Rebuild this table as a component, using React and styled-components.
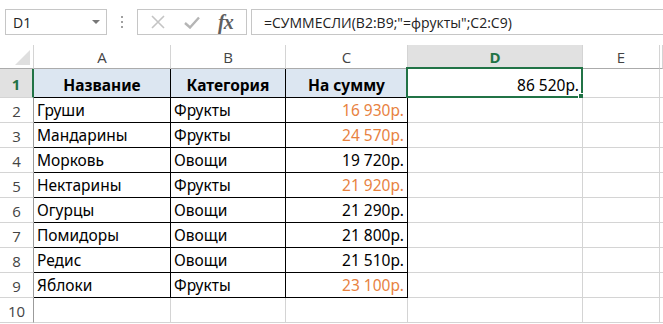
import React from "react";
import styled, { createGlobalStyle } from "styled-components";

const GlobalStyle = createGlobalStyle`
  html, body {
    margin: 0;
    padding: 0;
    background: #fff;
  }
  body {
    font-family: "Noto Sans", "Open Sans", sans-serif;
    overflow: hidden;
  }
`;

const Page = styled.div`
  width: 663px;
  height: 324px;
  overflow: hidden;
  background: #fff;
`;

const Toolbar = styled.div`
  display: flex;
  align-items: center;
  height: 26px;
  padding: 9px 0 10px 5px;
  font-family: "Open Sans", "Noto Sans", sans-serif;
`;

const NameBox = styled.div`
  box-sizing: border-box;
  width: 102px;
  height: 26px;
  border: 1px solid #c6c6c6;
  display: flex;
  align-items: center;
  justify-content: space-between;
  padding: 0 6px 0 7px;
  font-size: 14px;
  color: #222;
`;

const Caret = styled.span`
  width: 0;
  height: 0;
  border-left: 4px solid transparent;
  border-right: 4px solid transparent;
  border-top: 4px solid #777;
`;

const Grip = styled.div`
  width: 30px;
  display: flex;
  justify-content: center;
  svg {
    display: block;
  }
`;

const FxBox = styled.div`
  box-sizing: border-box;
  width: 110px;
  height: 26px;
  border: 1px solid #c6c6c6;
  display: flex;
  align-items: center;
  justify-content: space-around;
  padding: 0 4px;
`;

const FxLabel = styled.span`
  font-family: "Liberation Serif", "DejaVu Serif", serif;
  font-style: italic;
  font-weight: bold;
  font-size: 20px;
  color: #5f5f5f;
  letter-spacing: -1px;
`;

const FormulaInput = styled.div`
  box-sizing: border-box;
  flex: 1;
  height: 26px;
  margin-left: 4px;
  border: 1px solid #c6c6c6;
  border-right: none;
  display: flex;
  align-items: center;
  padding-left: 12px;
  font-size: 14px;
  color: #222;
`;

const Sheet = styled.div`
  display: grid;
  grid-template-columns: 34px 137px 115px 122px 175px 77px 3px;
  grid-template-rows: 24px 29px repeat(9, 25px);
`;

const ColHead = styled.div`
  box-sizing: border-box;
  border-right: 1px solid #d4d4d4;
  border-bottom: 1px solid #ababab;
  background: ${(p) => (p.$active ? "#e1e1e1" : "#fff")};
  color: ${(p) => (p.$active ? "#217346" : "#444")};
  font-weight: ${(p) => (p.$active ? "bold" : "normal")};
  font-family: "Open Sans", "Noto Sans", sans-serif;
  font-size: 15px;
  display: flex;
  align-items: center;
  justify-content: center;
  padding-top: 1px;
`;

const Corner = styled.div`
  box-sizing: border-box;
  border-right: 1px solid #d4d4d4;
  border-bottom: 1px solid #ababab;
  position: relative;
  &::after {
    content: "";
    position: absolute;
    right: 3px;
    bottom: 3px;
    width: 0;
    height: 0;
    border-left: 15px solid transparent;
    border-bottom: 15px solid #dfdfdf;
  }
`;

const RowHead = styled.div`
  box-sizing: border-box;
  border-right: ${(p) => (p.$active ? "2px solid #217346" : "1px solid #9b9b9b")};
  border-bottom: 1px solid #d4d4d4;
  background: ${(p) => (p.$active ? "#e1e1e1" : "#fff")};
  color: ${(p) => (p.$active ? "#217346" : "#444")};
  font-weight: ${(p) => (p.$active ? "bold" : "normal")};
  font-family: "Open Sans", "Noto Sans", sans-serif;
  font-size: 15px;
  display: flex;
  align-items: center;
  justify-content: center;
  padding-top: 1px;
`;

const Cell = styled.div`
  box-sizing: border-box;
  position: relative;
  border-right: 1px solid ${(p) => (p.$boxed ? "#000" : "#d4d4d4")};
  border-bottom: 1px solid ${(p) => (p.$boxed ? "#000" : "#d4d4d4")};
  background: ${(p) => (p.$head ? "#dce6f1" : "#fff")};
  color: ${(p) => (p.$orange ? "#e8823f" : "#000")};
  font-weight: ${(p) => (p.$head ? "bold" : "normal")};
  font-size: 15.5px;
  white-space: nowrap;
  display: flex;
  align-items: flex-end;
  justify-content: ${(p) =>
    p.$align === "right" ? "flex-end" : p.$align === "center" ? "center" : "flex-start"};
  padding: 0 3px 2px 3px;
  line-height: 20px;
`;

const Selection = styled.div`
  position: absolute;
  left: -2px;
  top: -2px;
  right: -1px;
  bottom: -1px;
  border: 2px solid #217346;
  pointer-events: none;
  &::after {
    content: "";
    position: absolute;
    right: -4px;
    bottom: -4px;
    width: 5px;
    height: 5px;
    background: #217346;
    border: 1px solid #fff;
  }
`;

const rows = [
  ["Груши", "Фрукты", "16 930р.", true],
  ["Мандарины", "Фрукты", "24 570р.", true],
  ["Морковь", "Овощи", "19 720р.", false],
  ["Нектарины", "Фрукты", "21 920р.", true],
  ["Огурцы", "Овощи", "21 290р.", false],
  ["Помидоры", "Овощи", "21 800р.", false],
  ["Редис", "Овощи", "21 510р.", false],
  ["Яблоки", "Фрукты", "23 100р.", true],
];

const columns = ["A", "B", "C", "D", "E", ""];

export default function App() {
  return (
    <Page>
      <GlobalStyle />
      <Toolbar>
        <NameBox>
          D1
          <Caret />
        </NameBox>
        <Grip>
          <svg width="3" height="12" viewBox="0 0 3 12">
            <rect x="0" y="0" width="2" height="2" fill="#a0a0a0" />
            <rect x="0" y="5" width="2" height="2" fill="#a0a0a0" />
            <rect x="0" y="10" width="2" height="2" fill="#a0a0a0" />
          </svg>
        </Grip>
        <FxBox>
          <svg width="14" height="14" viewBox="0 0 14 14">
            <path d="M1 1 L13 13 M13 1 L1 13" stroke="#c4c4c4" strokeWidth="1.6" fill="none" />
          </svg>
          <svg width="16" height="13" viewBox="0 0 16 13">
            <path d="M1 7 L6 11.5 L15 1.5" stroke="#b5b5b5" strokeWidth="2.4" fill="none" />
          </svg>
          <FxLabel>fx</FxLabel>
        </FxBox>
        <FormulaInput>=СУММЕСЛИ(B2:B9;"=фрукты";C2:C9)</FormulaInput>
      </Toolbar>

      <Sheet>
        <Corner />
        {columns.map((c, i) => (
          <ColHead key={i} $active={c === "D"}>
            {c}
          </ColHead>
        ))}

        <RowHead $active>1</RowHead>
        <Cell $boxed $head $align="center">Название</Cell>
        <Cell $boxed $head $align="center">Категория</Cell>
        <Cell $boxed $head $align="center">На сумму</Cell>
        <Cell $align="right">
          86 520р.
          <Selection />
        </Cell>
        <Cell />
        <Cell />

        {rows.map(([name, cat, sum, orange], i) => (
          <React.Fragment key={name}>
            <RowHead>{i + 2}</RowHead>
            <Cell $boxed>{name}</Cell>
            <Cell $boxed>{cat}</Cell>
            <Cell $boxed $align="right" $orange={orange}>
              {sum}
            </Cell>
            <Cell />
            <Cell />
            <Cell />
          </React.Fragment>
        ))}

        <RowHead>10</RowHead>
        <Cell />
        <Cell />
        <Cell />
        <Cell />
        <Cell />
        <Cell />
      </Sheet>
    </Page>
  );
}
